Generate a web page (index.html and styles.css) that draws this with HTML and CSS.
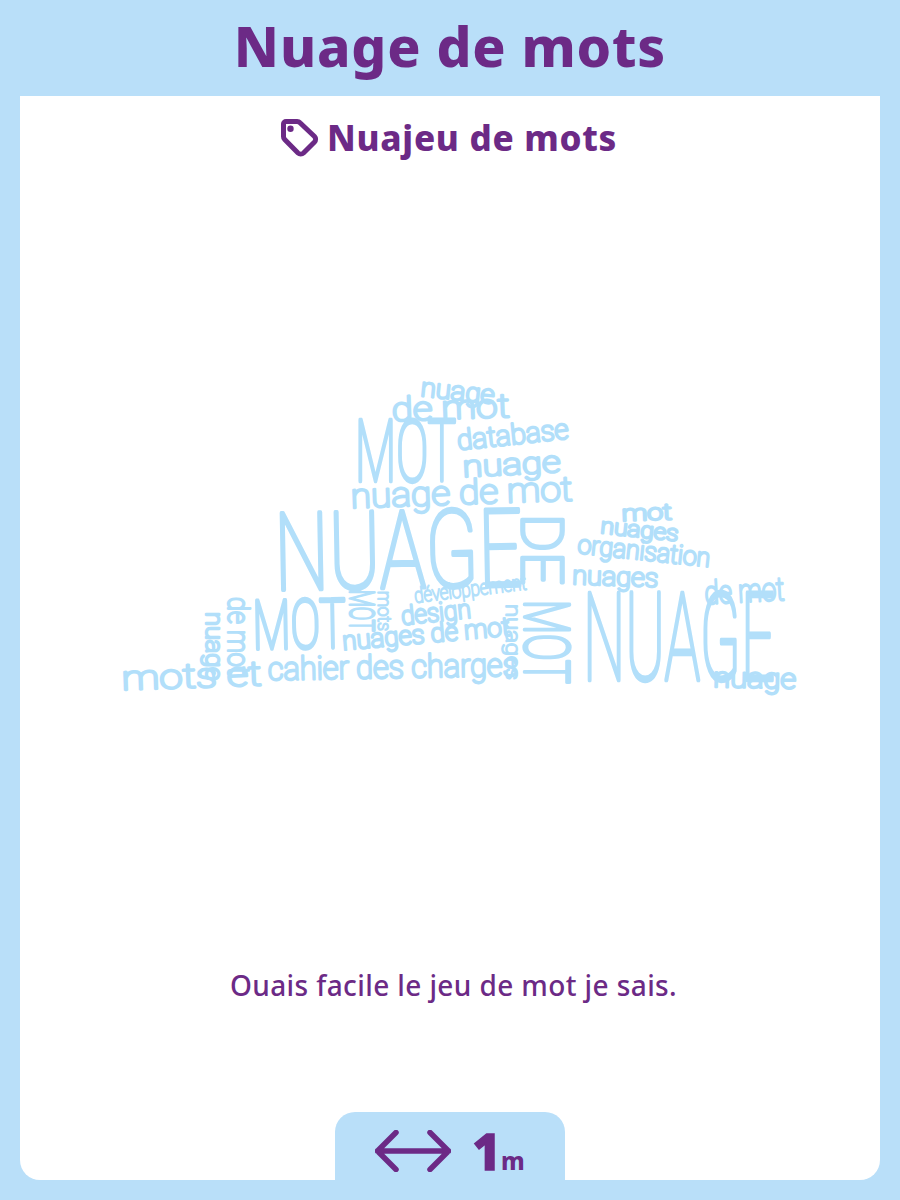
FILE: index.html
```html
<!DOCTYPE html>
<html lang="fr">
<head>
    <meta charset="UTF-8" />
    <title>Nuage de mots</title>
    <link rel="stylesheet" href="styles.css">
</head>
<body>
    <h1 class="page-title">Nuage de mots</h1>

    <main class="panel">
        <h2 class="answer">
            <svg class="tag-icon" viewBox="0 0 40 40" width="40" height="40" aria-hidden="true">
                <path d="M7 4.5h11a4 4 0 0 1 3 1.2L35.5 19.5a4 4 0 0 1 0 5.5L24.5 36a4 4 0 0 1-5.5 0L5.7 22.5a4 4 0 0 1-1.2-3V7A2.5 2.5 0 0 1 7 4.5z" />
                <circle cx="11.5" cy="11.7" r="3.2" />
            </svg>
            Nuajeu de mots
        </h2>

        <!-- viewBox is in page coordinates, words are placed freely on it -->
        <svg class="cloud" viewBox="20 200 860 540" width="860" height="540" role="img" aria-label="Nuage de mots">
            <text class="word" x="420" y="396" font-size="26" textLength="74" lengthAdjust="spacingAndGlyphs" transform="rotate(6 420 396)">nuage</text>
            <text class="word" x="392" y="421" font-size="33" textLength="118" lengthAdjust="spacingAndGlyphs" transform="rotate(-2 392 421)">de mot</text>
            <text class="word big" font-size="85" transform="translate(355 481) scale(.565 1)">MOT</text>
            <text class="word" x="458" y="450" font-size="28" textLength="112" lengthAdjust="spacingAndGlyphs" transform="rotate(-6 458 450)">database</text>
            <text class="word" x="463" y="477" font-size="30" textLength="98" lengthAdjust="spacingAndGlyphs" transform="rotate(-3 463 477)">nuage</text>
            <text class="word" x="351" y="508" font-size="34" textLength="222" lengthAdjust="spacingAndGlyphs" transform="rotate(-2 351 508)">nuage de mot</text>
            <text class="word big" font-size="108" transform="translate(275 590) rotate(-1) scale(.715 1)">NUAGE</text>
            <text class="word big" font-size="58" transform="translate(522 514) rotate(90)">DE</text>
            <text class="word" x="622" y="521" font-size="22" textLength="50" lengthAdjust="spacingAndGlyphs" transform="rotate(-2 622 521)">mot</text>
            <text class="word" x="600" y="533" font-size="22" textLength="78" lengthAdjust="spacingAndGlyphs" transform="rotate(6 600 533)">nuages</text>
            <text class="word" x="577" y="553" font-size="26" textLength="133" lengthAdjust="spacingAndGlyphs" transform="rotate(6 577 553)">organisation</text>
            <text class="word" x="572" y="584" font-size="26" textLength="86" lengthAdjust="spacingAndGlyphs" transform="rotate(2 572 584)">nuages</text>
            <text class="word small" x="415" y="603" font-size="21" textLength="113" lengthAdjust="spacingAndGlyphs" transform="rotate(-7 415 603)">développement</text>
            <text class="word" x="705" y="604" font-size="32" textLength="80" lengthAdjust="spacingAndGlyphs" transform="rotate(-3 705 604)">de mot</text>
            <text class="word big" font-size="122" transform="translate(583 680) scale(.49 1)">NUAGE</text>
            <text class="word" x="713" y="687" font-size="28" textLength="83" lengthAdjust="spacingAndGlyphs" transform="rotate(1 713 687)">nuage</text>
            <text class="word big" font-size="62" transform="translate(525 600) rotate(90) scale(.64 1)">MOT</text>
            <text class="word small" x="506" y="604" font-size="20" textLength="76" lengthAdjust="spacingAndGlyphs" transform="rotate(90 506 604)">nuages</text>
            <text class="word big" font-size="68" transform="translate(253 649) rotate(-1) scale(.65 1)">MOT</text>
            <text class="word" font-size="34" transform="translate(350 590) rotate(90) scale(.58 1)">MOT</text>
            <text class="word small" x="378" y="591" font-size="18" textLength="40" lengthAdjust="spacingAndGlyphs" transform="rotate(90 378 591)">mots</text>
            <text class="word" x="402" y="625" font-size="26" textLength="70" lengthAdjust="spacingAndGlyphs" transform="rotate(-6 402 625)">design</text>
            <text class="word" x="343" y="650" font-size="26" textLength="168" lengthAdjust="spacingAndGlyphs" transform="rotate(-5 343 650)">nuages de mot</text>
            <text class="word" x="228" y="597" font-size="30" textLength="78" lengthAdjust="spacingAndGlyphs" transform="rotate(90 228 597)">de mot</text>
            <text class="word" x="206" y="612" font-size="24" textLength="68" lengthAdjust="spacingAndGlyphs" transform="rotate(90 206 612)">nuage</text>
            <text class="word" x="122" y="690" font-size="34" textLength="140" lengthAdjust="spacingAndGlyphs" transform="rotate(-2 122 690)">mots et</text>
            <text class="word" x="268" y="680" font-size="32" textLength="250" lengthAdjust="spacingAndGlyphs" transform="rotate(-1 268 680)">cahier des charges</text>
        </svg>

        <p class="comment">Ouais facile le jeu de mot je sais.</p>

        <div class="difficulty">
            <svg class="arrow-icon" viewBox="0 0 76 42" width="76" height="42" aria-hidden="true">
                <path d="M21 2.5L2.5 21L21 39.5M55 2.5L73.5 21L55 39.5M2.5 21H73.5" />
            </svg>
            <span class="time">1<small>m</small></span>
        </div>
    </main>
</body>
</html>
```

FILE: styles.css
```css
body {
    font-family: 'Noto Sans', 'Open Sans', Arial, sans-serif;
    background-color: #b9dff9;
    color: #6c2a86;
    margin: 0;
    padding: 0 20px 20px 20px;
    height: 1200px;
    box-sizing: border-box;
    display: flex;
    flex-direction: column;
    overflow: hidden;
}
.page-title {
    height: 96px;
    margin: 0;
    font-size: 55px;
    font-weight: 800;
    letter-spacing: 0.8px;
    line-height: 91px;
    text-align: center;
}
.panel {
    flex: 1;
    background-color: #fff;
    border-radius: 0 0 20px 20px;
    display: flex;
    flex-direction: column;
    align-items: center;
}
.answer {
    display: flex;
    align-items: center;
    gap: 8px;
    height: 40px;
    margin: 21px 4px 0 0;
    font-size: 35px;
    font-weight: 800;
    letter-spacing: 0.7px;
}
.tag-icon {
    fill: none;
    stroke: #6c2a86;
    stroke-width: 5;
}
.tag-icon circle {
    fill: #6c2a86;
    stroke: none;
}
.cloud {
    margin-top: 43px;
}
.word {
    font-family: 'Roboto', 'Noto Sans', sans-serif;
    font-weight: 100;
    fill: #b2dffa;
    stroke: #b2dffa;
    stroke-width: 2.6;
    stroke-linejoin: round;
    stroke-linecap: round;
    vector-effect: non-scaling-stroke;
}
.word.big {
    stroke-width: 3.6;
}
.word.small {
    stroke-width: 1.8;
}
.comment {
    margin: 226px 0 0 7px;
    font-size: 28px;
    font-weight: 500;
    letter-spacing: 0.4px;
}
.difficulty {
    margin-top: auto;
    width: 230px;
    height: 68px;
    box-sizing: border-box;
    padding-top: 10px;
    background-color: #b9dff9;
    border-radius: 20px 20px 0 0;
    display: flex;
    align-items: center;
    justify-content: center;
    gap: 21px;
}
.arrow-icon {
    fill: none;
    stroke: #6c2a86;
    stroke-width: 5.5;
    stroke-linecap: round;
    stroke-linejoin: round;
}
.time {
    font-size: 50px;
    font-weight: 800;
    line-height: 1;
    -webkit-text-stroke: 1.5px #6c2a86;
}
.time small {
    font-size: 24px;
    -webkit-text-stroke: 0;
}
```
